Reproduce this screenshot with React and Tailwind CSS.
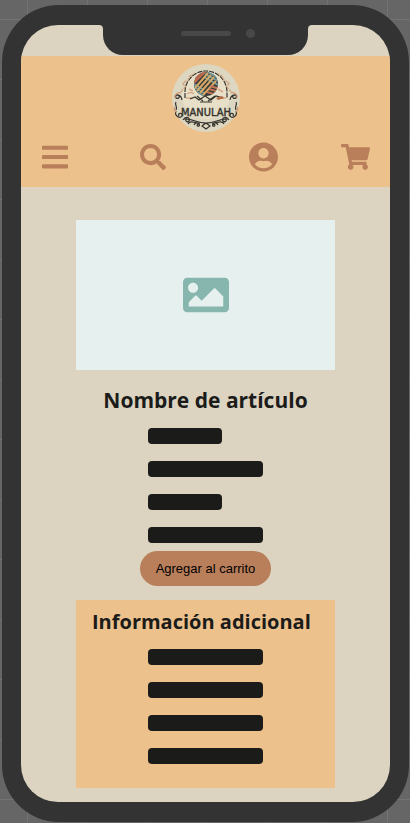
import { FaBars, FaSearch, FaUserCircle, FaShoppingCart, FaImage } from "react-icons/fa";

function Logo() {
  return (
    <svg viewBox="0 0 68 68" className="size-[68px]" role="img" aria-label="Manulah">
      <defs>
        <clipPath id="yarn">
          <circle cx="34" cy="20" r="12" />
        </clipPath>
      </defs>
      <circle cx="34" cy="34" r="34" fill="#ddd6c0" />
      <circle cx="34" cy="31" r="24" fill="#e8dfc8" />
      <path d="M13 34V28a21 21 0 0 1 42 0v6" fill="none" stroke="#34332d" strokeWidth="1.200" strokeDasharray="5 1" />
      <path d="M9 28l4-5-2-4 5-3 2-4 4-2M59 28l-4-5 2-4-5-3-2-4-4-2" fill="none" stroke="#cfa17c" strokeWidth="1.400" strokeDasharray="3 1" />
      <g clipPath="url(#yarn)">
        <rect x="22" y="8" width="25" height="25" fill="#3a3a37" />
        <g fill="none" strokeWidth="2">
          <path d="M22 13l8-8M22 16L34 4M22 19L37 4" stroke="#bd6b4e" />
          <path d="M34 7l14 8M33 10l15 8M32 13l16 9" stroke="#6b9ba0" />
          <path d="M20 19l12 7M20 22l12 7M20 25l12 7M20 28l10 6" stroke="#6b9ba0" />
          <path d="M23 24L36 9M25 27L39 11M28 29L42 13M31 31L44 17" stroke="#d5a866" />
          <path d="M38 22l10 3M37 25l10 3M35 28l10 3" stroke="#c27456" />
        </g>
      </g>
      <path d="M15 30q4-3 7 0M46 25l5 3M14 34h7M48 34h6M17 25l4 2" fill="none" stroke="#d9a887" strokeWidth="1.500" />
      <path d="M18 35l5-2 4 3 6-4 6 4 5-4 7 2M25 32l6 5M43 32l-7 5M28 38h12" fill="none" stroke="#34332d" strokeWidth="1.200" />
      <path d="M44 34l6-2 2 2-6 2z" fill="#b66b42" />
      <g fill="none" stroke="#34332d" strokeWidth="1.200">
        <path id="scroll" d="M10 36c-1-6-8-7-6-2 3 2 5-3 1-3M4 38c-2 3 2 4 0 8M4 47c-2 5 4 8 6 5 1-4-5-3-3 0M11 56c3-5 8-2 6 1-2 2-5-1-2-2M16 60c2-5 8 0 12-1M22 61c2-4 7-1 5 1-2 1-3-2 0-2" />
        <use href="#scroll" transform="translate(68 0) scale(-1 1)" />
        <path d="M12 55c7-1 13 4 22 4s15-5 22-4M30 62l4-3 4 3-4 3z" />
      </g>
      <path d="M3 34c-1-4 3-6 6-5M65 34c1-4-3-6-6-5M3 43c-2 2 0 4 1 5M65 43c2 2 0 4-1 5" fill="none" stroke="#cf9874" strokeWidth="1.200" />
      <text x="34" y="52" textAnchor="middle" fill="#34332d" stroke="#34332d" strokeWidth="0.400" fontFamily="'DejaVu Sans Condensed', 'DejaVu Sans', sans-serif" fontSize="11">
        MANULAH
      </text>
    </svg>
  );
}

function Notch() {
  return (
    <div className="absolute inset-x-0 top-0 flex justify-center">
      <svg viewBox="0 0 4 4" className="size-1 text-[#333333]" aria-hidden="true">
        <path d="M0 0H4V4Q4 0 0 0Z" fill="currentColor" />
      </svg>
      <div className="relative flex h-[30px] w-[205px] justify-center rounded-b-[20px] bg-[#333333] pt-1.5">
        <div className="h-[5px] w-[50px] rounded-full bg-[#484848]" />
        <div className="absolute top-1 right-[53px] size-[9px] rounded-full bg-[#484848]" />
      </div>
      <svg viewBox="0 0 4 4" className="size-1 text-[#333333]" aria-hidden="true">
        <path d="M4 0H0V4Q0 0 4 0Z" fill="currentColor" />
      </svg>
    </div>
  );
}

function Lines({ widths }) {
  return (
    <div className="mx-auto flex w-[115px] flex-col gap-[17px]">
      {widths.map((width, i) => (
        <div key={i} className={`h-4 rounded bg-[#1b1b1a] ${width}`} />
      ))}
    </div>
  );
}

export default function App() {
  return (
    <div className="min-h-screen bg-[#666666] bg-[linear-gradient(to_right,#737373_1px,transparent_1px),linear-gradient(to_bottom,#737373_1px,transparent_1px)] bg-[size:60px_60px] bg-[position:27px_19px] pt-[5px] pr-px pb-px pl-[2px] font-['Open_Sans',sans-serif] text-[#1b1b1a]">
      <div className="rounded-[57px] border-x-[19px] border-y-[20px] border-[#333333] bg-[#333333]">
        <div className="relative overflow-hidden rounded-[37px] bg-[#dcd4c1] pt-[31px] pb-[14px]">
          <Notch />
          <header className="bg-[#ecc18c] pt-2 pb-[15px]">
            <div className="flex justify-center">
              <Logo />
            </div>
            <nav aria-label="Principal" className="mt-[10px] flex items-center justify-between pr-5 pl-[21px] text-[#b97f5a]">
              <div className="flex items-center gap-[72px]">
                <button type="button" aria-label="Menú">
                  <FaBars className="h-[30px] w-[26px]" />
                </button>
                <button type="button" aria-label="Buscar">
                  <FaSearch className="size-[26px]" />
                </button>
              </div>
              <div className="flex items-center gap-[63px]">
                <button type="button" aria-label="Mi cuenta">
                  <FaUserCircle className="h-[30px] w-[29px]" />
                </button>
                <button type="button" aria-label="Carrito">
                  <FaShoppingCart className="h-[26px] w-[29px]" />
                </button>
              </div>
            </nav>
          </header>
          <main className="px-[55px] pt-[33px]">
            <div className="flex h-[150px] items-center justify-center bg-[#e6f0ee]">
              <FaImage className="size-[46px] text-[#86b6ae]" />
            </div>
            <h1 className="mt-4 mb-[14px] text-center text-[21px] leading-7 font-bold">Nombre de artículo</h1>
            <Lines widths={["w-[74px]", "w-full", "w-[74px]", "w-full"]} />
            <div className="mt-2 flex justify-center">
              <button type="button" className="h-[35px] rounded-full bg-[#b97f5a] px-4 font-['Liberation_Sans',Arial,sans-serif] text-[13px] text-black">
                Agregar al carrito
              </button>
            </div>
            <section className="mt-[14px] bg-[#ecc18c] px-4 pt-2 pb-6">
              <h2 className="mb-[13px] text-xl leading-7 font-bold whitespace-nowrap">Información adicional</h2>
              <Lines widths={["w-full", "w-full", "w-full", "w-full"]} />
            </section>
          </main>
        </div>
      </div>
    </div>
  );
}
